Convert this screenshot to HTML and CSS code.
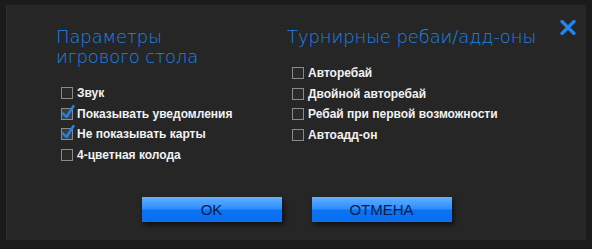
FILE: index.html
```html
<!DOCTYPE html>
<html lang="ru">
<head>
<meta charset="utf-8">
<link rel="stylesheet" href="styles.css">
</head>
<body>
<div class="panel">
  <button class="close" aria-label="Закрыть">
    <svg width="16" height="15" viewBox="0 0 16 15"><path d="M2 1.5 L14 13.5 M14 1.5 L2 13.5" stroke="#1f86f0" stroke-width="3.2" stroke-linecap="round"/></svg>
  </button>
  <div class="columns">
    <section class="col col1">
      <h2 class="title">Параметры<br>игрового стола</h2>
      <ul class="opts">
        <li><span class="box"></span>Звук</li>
        <li><span class="box checked"><svg class="tick" width="14" height="16" viewBox="0 0 14 16"><path d="M2 9.5 L5.5 13 L12.5 2" fill="none" stroke="#2183ea" stroke-width="2.4" stroke-linecap="round" stroke-linejoin="round"/></svg></span>Показывать уведомления</li>
        <li><span class="box checked"><svg class="tick" width="14" height="16" viewBox="0 0 14 16"><path d="M2 9.5 L5.5 13 L12.5 2" fill="none" stroke="#2183ea" stroke-width="2.4" stroke-linecap="round" stroke-linejoin="round"/></svg></span>Не показывать карты</li>
        <li><span class="box"></span>4-цветная колода</li>
      </ul>
    </section>
    <section class="col col2">
      <h2 class="title">Турнирные ребаи/адд-оны</h2>
      <ul class="opts">
        <li><span class="box"></span>Авторебай</li>
        <li><span class="box"></span>Двойной авторебай</li>
        <li><span class="box"></span>Ребай при первой возможности</li>
        <li><span class="box"></span>Автоадд-он</li>
      </ul>
    </section>
  </div>
  <div class="buttons">
    <button class="btn">OK</button>
    <button class="btn">ОТМЕНА</button>
  </div>
</div>
</body>
</html>
```
FILE: styles.css
```css
html, body {
  margin: 0;
  padding: 0;
  background: #1b1b1b;
}
body {
  width: 592px;
  height: 249px;
  overflow: hidden;
  font-family: "Liberation Sans", Arial, sans-serif;
}
.panel {
  position: relative;
  margin: 5px 6px 0 6px;
  width: 580px;
  height: 235px;
  box-sizing: border-box;
  background: #262626;
  border-left: 1px solid #2e2e2e;
  padding: 22px 0 0 49px;
}
.close {
  position: absolute;
  top: 15px;
  right: 10px;
  border: 0;
  background: none;
  padding: 0;
  width: 16px;
  height: 15px;
  display: block;
}
.close svg { display: block; }
.columns {
  display: grid;
  grid-template-columns: 231px 260px;
}
.title {
  margin: 0;
  font-family: "DejaVu Sans", sans-serif;
  font-weight: 200;
  font-size: 18px;
  line-height: 20px;
  color: #1d84e6;
  letter-spacing: -0.1px;
}
.opts {
  list-style: none;
  margin: 16px 0 0 5px;
  padding: 0;
}
.opts li {
  display: flex;
  align-items: center;
  height: 20.5px;
  color: #f2f2f2;
  font-weight: bold;
  font-size: 12px;
}
.box {
  position: relative;
  width: 10px;
  height: 10px;
  border: 1px solid #8a8a8a;
  background: #2a2a2a;
  margin-right: 4px;
  flex: none;
}
.box.checked {
  background: #3a3f46;
}
.tick {
  position: absolute;
  left: -1px;
  top: -5px;
  display: block;
}
.buttons {
  display: flex;
  justify-content: center;
  gap: 30px;
  margin-left: -49px;
  margin-top: 32px;
}
.btn {
  width: 140px;
  height: 25px;
  border: 0;
  padding: 0;
  background: linear-gradient(to bottom, #62b0ff 0%, #2d8cff 48%, #0a72f6 52%, #0a6ff0 100%);
  color: #0a1d45;
  font-family: "Liberation Sans", Arial, sans-serif;
  font-size: 15px;
  box-shadow: 2px 3px 5px rgba(0,0,0,0.6);
}
```
